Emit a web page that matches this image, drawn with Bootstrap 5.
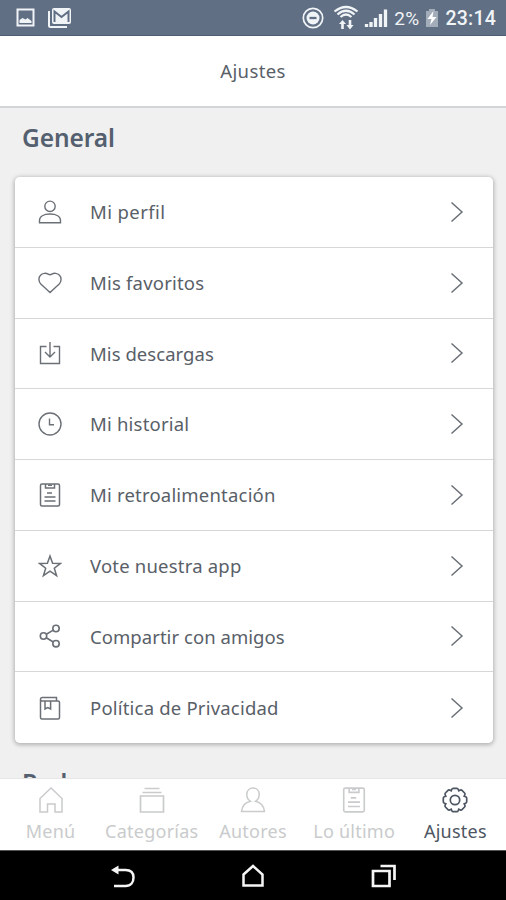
<!DOCTYPE html>
<html lang="es">
<head>
<meta charset="utf-8">
<meta name="viewport" content="width=device-width, initial-scale=1">
<title>Ajustes</title>
<link href="https://cdn.jsdelivr.net/npm/bootstrap@5.3.0/dist/css/bootstrap.min.css" rel="stylesheet">
<style>
body{font-family:"Noto Sans","Open Sans",sans-serif;color:#596068;background:#f0f0f0}
.screen{height:900px;overflow:hidden}
svg{display:block;flex:none;fill:none;stroke:currentColor}
.statusbar{height:36px;background:#606f84;color:#f1f4f7;font-family:Roboto,sans-serif;border-bottom:1px solid #4e5b70;padding:0 10px 0 16px}
.mailicon{margin-left:12px}
.pct{font-size:19px;line-height:37px;margin-left:6px;letter-spacing:.3px;padding-top:2px}
.batt{margin-left:5px}
.clock{font-size:19.5px;font-weight:500;line-height:37px;letter-spacing:.2px;margin-left:7px;padding-top:2px}
.appbar{height:72px;border-bottom:2px solid #d2d6d7;font-size:18.5px;letter-spacing:.4px}
.heading{font-size:24.5px;font-weight:600;color:#54606f;line-height:34px;margin:0 0 0 22px;letter-spacing:-.1px}
.heading-first{padding-top:13px}
.heading-next{padding-top:23px}
.settings{margin:22px 13px 0 15px;border-radius:5px;box-shadow:0 1px 4px 1px rgba(0,0,0,.26)}
.settings .list-group-item{height:70.75px;padding:0 29px 0 23px;border:0;border-bottom:1.5px solid #d6d7d8;font-size:18.5px;color:#596068}
.settings .list-group-item:last-child{border-bottom:0}
.settings .label{margin-left:28px;letter-spacing:.2px}
.settings .label-wide{letter-spacing:.4px}
.settings .label-tight{letter-spacing:.05px}
.settings svg{color:#6b7076}
.tabs{height:72px;background:#fff;border-top:1px solid #e6e6e6;font-size:18px;line-height:24px;letter-spacing:.25px;color:#c9cbcc}
.tabs a{width:20%;color:inherit;padding-top:8px;white-space:nowrap}
.tabs .current{color:#4d5662}
.tabs span{margin-top:6px}
.sysnav{height:50px;background:#000;color:#f5f5f5;border-top:1px solid #555;padding:0 108px}
</style>
</head>
<body>
<svg width="0" height="0" class="position-absolute">
<defs>
<symbol id="user" viewBox="0 0 24 24"><circle cx="12" cy="6.300" r="5.200"/><path d="M1.500 22.700v-2.200c0-4 4.200-6.500 10.500-6.500s10.500 2.500 10.500 6.500v2.200z"/></symbol>
<symbol id="person" viewBox="0 0 26 26"><path d="M13 1C9.500 1 6.800 3.600 6.800 7.500c0 3 1.500 5.500 3.700 6.800C5.500 15.500 2 18 1.500 24.500h23c-.5-6.500-4-9-9-10.200 2.200-1.300 3.700-3.800 3.700-6.800C19.200 3.600 16.500 1 13 1z"/></symbol>
<symbol id="heart" viewBox="0 0 24 24"><path d="M12 21.500L2.800 13C.4 10.500.3 6.500 2.500 4.300 4.500 2 8 1.800 10.200 3.200q1.800 1.200 3.600 0c2.200-1.400 5.700-1.200 7.700 1.100 2.200 2.200 2.100 6.200-.3 8.700z"/></symbol>
<symbol id="download" viewBox="0 0 24 24"><path d="M8.500 5.500H2.500v17h19v-17h-6M12 1v15M7 11l5 5 5-5"/></symbol>
<symbol id="clock" viewBox="0 0 24 24"><circle cx="12" cy="12" r="11"/><path d="M11.500 6.500v6.200H16"/></symbol>
<symbol id="note" viewBox="0 0 24 24"><rect x="2.500" y="1" width="19" height="22" rx="1.500"/><path d="M7.500 1v4h9V1M10 2.200h4M9 10h5M6.500 14h11M6.500 18h11"/></symbol>
<symbol id="star" viewBox="0 0 24 24"><path d="M12 2l2.600 7.200 7.900.2-6.200 4.800 2.300 7.500-6.600-4.500-6.600 4.500 2.300-7.500L1.500 9.400l7.900-.2z"/></symbol>
<symbol id="share" viewBox="0 0 24 24"><circle cx="5.500" cy="12" r="3.200"/><circle cx="18" cy="4.500" r="3.200"/><circle cx="18" cy="19.700" r="3.200"/><path d="M8.300 10.300l7-4.200M8.300 13.700l7 4.300"/></symbol>
<symbol id="book" viewBox="0 0 24 24"><path d="M2.500 3v18.500q0 1.500 1.500 1.500h16q1.500 0 1.500-1.500V6.500q0-1.500-1.500-1.500H4Q2.500 5 2.500 3.300q0-1.800 1.500-1.800h14.500V5M7 5v8l2.800-1.500 2.800 1.500V5"/></symbol>
<symbol id="chevron" viewBox="0 0 14 22"><path d="M1.500 1.500L12 11 1.500 20.500"/></symbol>
</defs>
</svg>
<div class="screen d-flex flex-column">
<div class="statusbar d-flex align-items-center flex-shrink-0">
<svg width="19" height="19" viewBox="0 0 19 19"><rect x="1.500" y="1.500" width="16" height="16" stroke-width="2"/><path d="M3.500 15v-3l3-2 3 1.500 2-1.500 4 3v2z" fill="currentColor" stroke="none"/></svg>
<svg class="mailicon" width="25" height="22" viewBox="0 0 25 22"><path d="M2 4v14.500q0 1.500 1.500 1.500H20" stroke-width="2"/><rect x="5" y="1" width="19" height="16" rx="2" fill="currentColor" stroke="none"/><path d="M7.500 15V4.500l7 5.500 7-5.500V15" stroke="#606f84" stroke-width="2"/></svg>
<div class="d-flex align-items-center ms-auto">
<svg width="22" height="22" viewBox="0 0 22 22"><circle cx="11" cy="11" r="9.700" stroke-width="1.700"/><circle cx="11" cy="11" r="6.500" fill="currentColor" stroke="none"/><path d="M7.500 11h7" stroke="#606f84" stroke-width="2.300"/></svg>
<svg class="ms-2" width="28" height="26" viewBox="0 0 28 26"><path d="M2.500 6.500Q14-2.500 25.500 6.500M5.500 9.500Q14 2 22.500 9.500M8.500 12Q14 7 19.500 12" stroke-width="2.200"/><path d="M7 19l3.500-4 3.500 4h-2.200v5H9.200v-5zM14.500 20h2.200v-5h2.600v5h2.200L18 24.500z" fill="currentColor" stroke="none"/></svg>
<svg class="ms-1" width="24" height="20" viewBox="0 0 24 20"><path d="M2.500 19v-3M7 19v-5M11.500 19V10M16.500 19V6M21.500 19V1.500" stroke-width="3.300"/></svg>
<span class="pct">2%</span>
<svg class="batt" width="14" height="20" viewBox="0 0 14 20"><path d="M1 3h3V1h6v2h3v16H1z" fill="#a3adb9" stroke="none"/><path d="M8.500 3L2.500 11h4L5 17l6.500-8H7.500z" fill="#fff" stroke="none"/></svg>
<span class="clock">23:14</span>
</div>
</div>
<header class="appbar bg-white d-flex align-items-center justify-content-center flex-shrink-0">Ajustes</header>
<main class="flex-grow-1 overflow-hidden">
<h2 class="heading heading-first">General</h2>
<div class="settings list-group">
<a class="list-group-item d-flex align-items-center" href="#"><svg width="24" height="24" stroke-width="1.400"><use href="#user"/></svg><span class="label label-wide">Mi perfil</span><svg class="ms-auto" width="14" height="22" stroke-width="1.500"><use href="#chevron"/></svg></a>
<a class="list-group-item d-flex align-items-center" href="#"><svg width="24" height="24" stroke-width="1.400"><use href="#heart"/></svg><span class="label">Mis favoritos</span><svg class="ms-auto" width="14" height="22" stroke-width="1.500"><use href="#chevron"/></svg></a>
<a class="list-group-item d-flex align-items-center" href="#"><svg width="24" height="24" stroke-width="1.400"><use href="#download"/></svg><span class="label label-tight">Mis descargas</span><svg class="ms-auto" width="14" height="22" stroke-width="1.500"><use href="#chevron"/></svg></a>
<a class="list-group-item d-flex align-items-center" href="#"><svg width="24" height="24" stroke-width="1.400"><use href="#clock"/></svg><span class="label">Mi historial</span><svg class="ms-auto" width="14" height="22" stroke-width="1.500"><use href="#chevron"/></svg></a>
<a class="list-group-item d-flex align-items-center" href="#"><svg width="24" height="24" stroke-width="1.500"><use href="#note"/></svg><span class="label">Mi retroalimentación</span><svg class="ms-auto" width="14" height="22" stroke-width="1.500"><use href="#chevron"/></svg></a>
<a class="list-group-item d-flex align-items-center" href="#"><svg width="24" height="24" stroke-width="1.500"><use href="#star"/></svg><span class="label">Vote nuestra app</span><svg class="ms-auto" width="14" height="22" stroke-width="1.500"><use href="#chevron"/></svg></a>
<a class="list-group-item d-flex align-items-center" href="#"><svg width="24" height="24" stroke-width="1.600"><use href="#share"/></svg><span class="label label-tight">Compartir con amigos</span><svg class="ms-auto" width="14" height="22" stroke-width="1.500"><use href="#chevron"/></svg></a>
<a class="list-group-item d-flex align-items-center" href="#"><svg width="24" height="24" stroke-width="1.500"><use href="#book"/></svg><span class="label">Política de Privacidad</span><svg class="ms-auto" width="14" height="22" stroke-width="1.500"><use href="#chevron"/></svg></a>
</div>
<h2 class="heading heading-next">Red</h2>
</main>
<nav class="tabs d-flex flex-shrink-0">
<a class="d-flex flex-column align-items-center text-decoration-none" href="#"><svg width="26" height="26" viewBox="0 0 26 26" stroke-width="1.500"><path d="M2 11.500L13 1l11 10.500V25h-7v-8H9.500v8H2z"/></svg><span>Menú</span></a>
<a class="d-flex flex-column align-items-center text-decoration-none" href="#"><svg width="26" height="26" viewBox="0 0 26 26" stroke-width="1.700"><path d="M1.500 9h23v16h-23zM3.500 5.500h19M5.500 1.500h15"/></svg><span>Categorías</span></a>
<a class="d-flex flex-column align-items-center text-decoration-none" href="#"><svg width="26" height="26" stroke-width="1.500"><use href="#person"/></svg><span>Autores</span></a>
<a class="d-flex flex-column align-items-center text-decoration-none" href="#"><svg width="26" height="26" stroke-width="1.500"><use href="#note"/></svg><span>Lo último</span></a>
<a class="d-flex flex-column align-items-center text-decoration-none current" href="#"><svg width="26" height="26" viewBox="0 0 26 26" stroke-width="1.700"><circle cx="13" cy="13" r="4.700"/><path d="M22.200 9.200l1.500.6q1 .4 1 1.400v3.600q0 1-1 1.400l-1.500.6.700 1.500q.4 1-.3 1.700l-2.600 2.600q-.7.7-1.700.3l-1.500-.7-.6 1.500q-.4 1-1.400 1h-3.600q-1 0-1.400-1l-.6-1.500-1.500.7q-1 .4-1.700-.3L3.400 20q-.7-.7-.3-1.700l.7-1.500-1.500-.6q-1-.4-1-1.400v-3.600q0-1 1-1.400l1.500-.6-.7-1.500q-.4-1 .3-1.700L6 3.400q.7-.7 1.700-.3l1.500.7.6-1.500q.4-1 1.400-1h3.600q1 0 1.400 1l.6 1.500 1.500-.7q1-.4 1.700.3L22.600 6q.7.7.3 1.700z"/></svg><span>Ajustes</span></a>
</nav>
<div class="sysnav d-flex align-items-center justify-content-between flex-shrink-0">
<svg width="28" height="26" viewBox="0 0 28 26" stroke-width="2.500"><path d="M8 7h9.500C23 7 25.500 10 25.500 14.500S23 23 17.500 23H6"/><path d="M3 7l7.500-4.500v9z" fill="currentColor" stroke="none"/></svg>
<svg width="24" height="26" viewBox="0 0 24 26" stroke-width="2.500"><path d="M2.500 11.500L12 3l9.500 8.500v11h-19z"/></svg>
<svg width="28" height="26" viewBox="0 0 28 26" stroke-width="2.700"><path d="M3 8h16.500v15H3zM10.500 3h14v14"/></svg>
</div>
</div>
<script src="https://cdn.jsdelivr.net/npm/bootstrap@5.3.0/dist/js/bootstrap.bundle.min.js"></script>
</body>
</html>
